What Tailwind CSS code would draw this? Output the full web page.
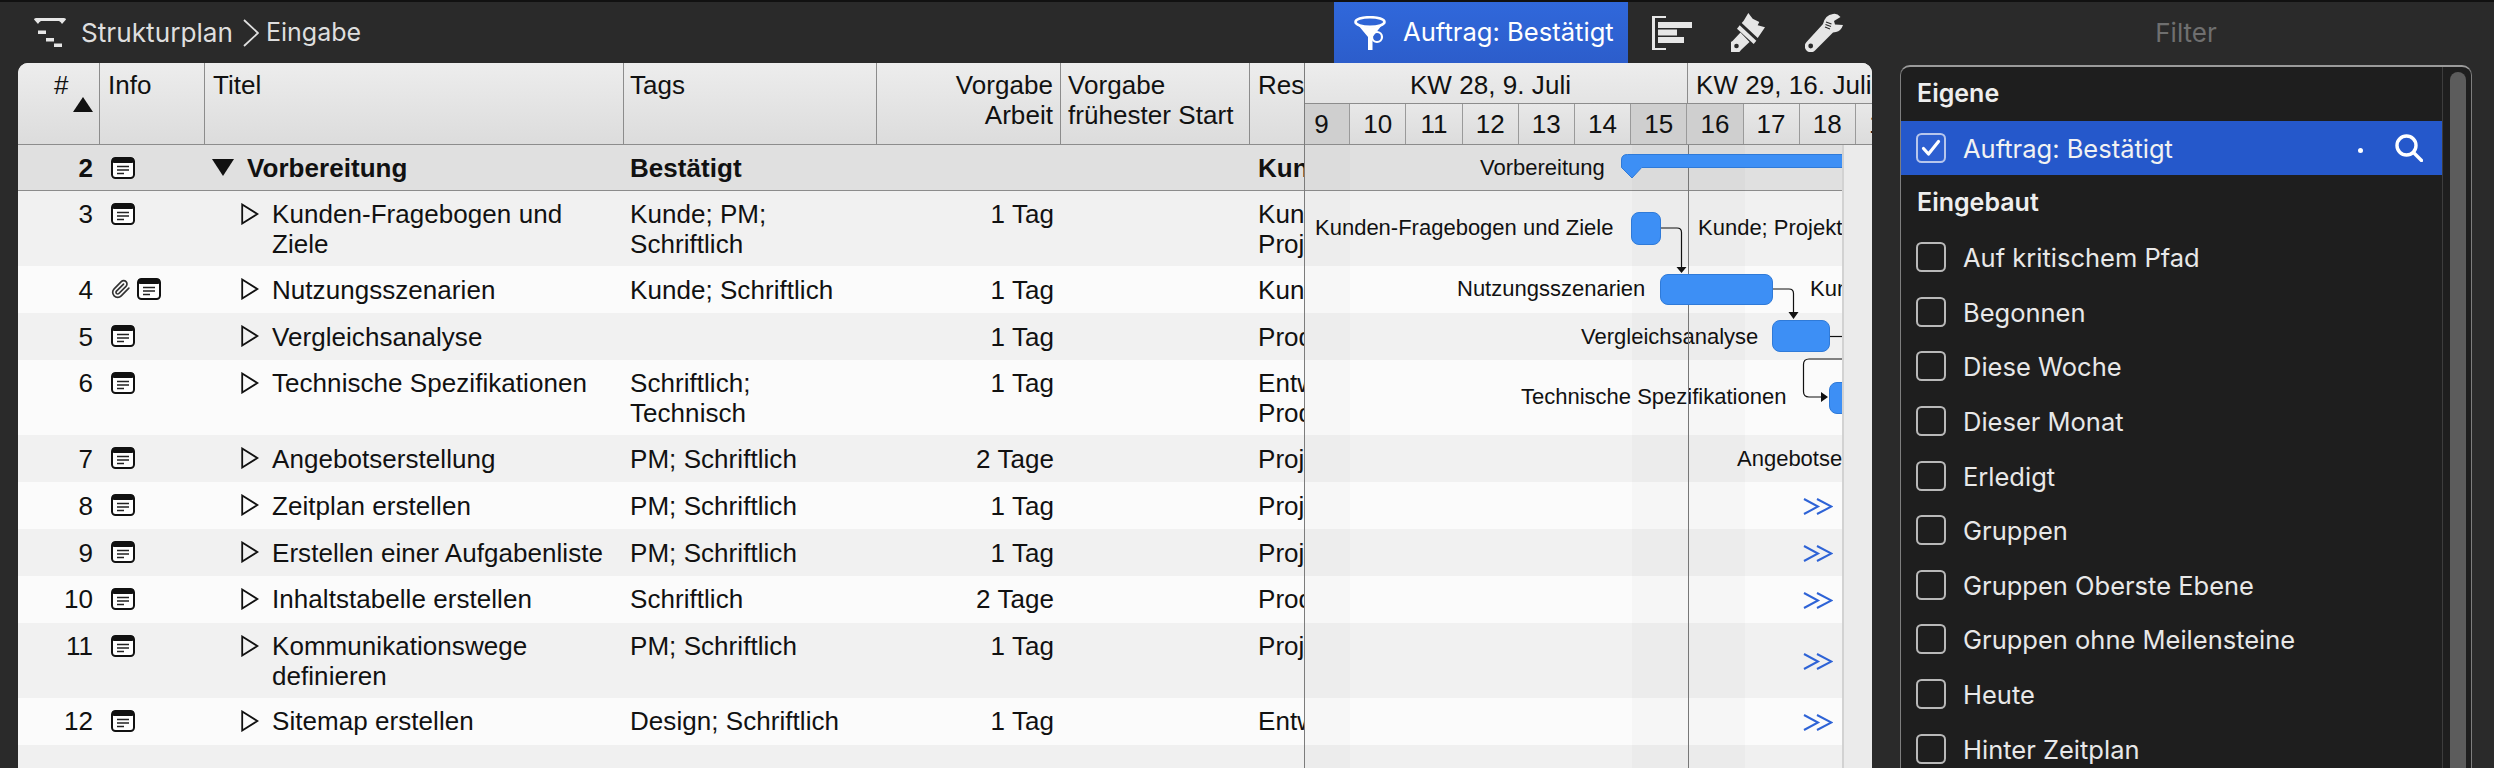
<!DOCTYPE html>
<html lang="de">
<head>
<meta charset="UTF-8">
<title>Strukturplan - Eingabe</title>
<script src="https://cdn.jsdelivr.net/npm/@tailwindcss/browser@4"></script>
</head>
<body class="w-[2494px] h-[768px] overflow-hidden bg-[#2a2a2a] font-['Inter',sans-serif]">

<svg class="hidden">
  <symbol id="note" viewBox="0 0 24 22">
    <rect x="1" y="1" width="22" height="20" rx="3.5" fill="#fff" stroke="#111" stroke-width="2"/>
    <rect x="1" y="1" width="22" height="5" rx="2" fill="#111"/>
    <path d="M6 9.5h12M6 13h12M6 16.5h7" stroke="#222" stroke-width="1.6" fill="none"/>
  </symbol>
  <symbol id="disc" viewBox="0 0 18 22">
    <path d="M1.2 1.5 16.4 11 1.2 20.5Z" fill="none" stroke="#111" stroke-width="1.8"/>
  </symbol>
  <symbol id="more" viewBox="0 0 30 17">
    <path d="M1 1 15 8.5 1 16M14 1 28.5 8.5 14 16" fill="none" stroke="#2e63d6" stroke-width="2"/>
  </symbol>
  <symbol id="box" viewBox="0 0 30 30">
    <rect x="1" y="1" width="28" height="28" rx="4.5" fill="none" stroke="#b9b9b9" stroke-width="2"/>
  </symbol>
</svg>

<!-- toolbar -->
<header class="flex h-[63px] border-t-2 border-[#111]">
  <div class="w-[1334px] flex items-center pl-[34px] text-[#dedede]">
    <svg class="w-[32px] h-[29px]" viewBox="0 0 32 29" fill="#e6e6e6"><path d="M0 1.5Q0 0 2 0H30Q32 0 32 1.5L28 6Q27 4 25 3H7Q5 4 4 6ZM4 12.5h8v3.5H4ZM12 20h8v3.5h-8ZM20 25.5h8v3.5h-8Z"/></svg>
    <span class="ml-[15px] text-[26.2px]">Strukturplan</span>
    <svg class="ml-[10px] w-[16px] h-[28px]" viewBox="0 0 16 28" fill="none" stroke="#e0e0e0" stroke-width="1.8"><path d="M1 1 15 14 1 27"/></svg>
    <span class="ml-[7px] text-[25px]">Eingabe</span>
  </div>
  <div class="w-[294px] flex items-center pl-[20px] bg-gradient-to-b from-[#3068db] to-[#2c5dcb] text-white text-[25.6px]">
    <svg class="w-[32px] h-[34px] shrink-0" viewBox="0 0 32 34" fill="none" stroke="#fff"><ellipse cx="16" cy="6" rx="14.5" ry="4.8" stroke-width="2.6"/><path d="M4 9Q16 14 28 9L18.5 21V34H14V21Z" fill="#fff" stroke="none"/><circle cx="23" cy="21" r="5" stroke-width="2.2"/></svg>
    <span class="ml-[17px] whitespace-nowrap">Auftrag: Bestätigt</span>
  </div>
  <div class="w-[272px] flex items-center pl-[24px]">
    <svg class="w-[40px] h-[34px]" viewBox="0 0 40 34" fill="#e6e6e6"><path d="M0 0h14v2H3v30h11v2H0Z"/><path d="M6 6h34v6H6ZM6 13.5h19v6H6ZM6 21h26v6H6Z"/></svg>
    <svg class="ml-[39px] w-[35px] h-[39px]" viewBox="0 0 35 39" fill="#e6e6e6"><path d="M10.7 10 12.7 7.7 17.3 0 21.7 5.7 28.3 9 26.7 12.3 34 14.3 26.7 25Z"/><path d="M6 15.7 8.7 12.3 25.3 27.7 22.7 31Z"/><path d="M9.5 19.5 18.5 29 10 37A6.5 6.5 0 1 1 1.5 28Z"/><circle cx="5.5" cy="33" r="2.3" fill="#2a2a2a"/></svg>
    <svg class="ml-[39px] w-[38px] h-[39px]" viewBox="0 0 38 39" fill="#e6e6e6"><path d="M1.5 29 18 11Q20 2 28 1 32 0 35.5 4L29 8 30 11.5 38 12Q36 18 31 19L28 19.5 10 37.5A6 6 0 1 1 1.5 29Z"/><circle cx="5.7" cy="33" r="2.4" fill="#2a2a2a"/><path d="M20.5 11.5l5.5 2M21 9l5.500 2M20 14l5 2" stroke="#2a2a2a" stroke-width="1.1" fill="none"/></svg>
  </div>
  <div class="w-[572px] flex items-center justify-center text-[#6f6f6f] text-[26px]">Filter</div>
</header>

<main class="flex pl-[18px]">
  <!-- table + gantt -->
  <section class="flex w-[1854px] h-[705px] rounded-t-[10px] overflow-hidden bg-[#f0f0f0] font-['Liberation_Sans',sans-serif] text-[26px] leading-[30px] tracking-[0.05px] text-[#111]">
    <div class="w-[1286px] shrink-0 flex flex-col">
      <div class="flex h-[82px] shrink-0 border-b border-[#8c8c8c] bg-gradient-to-b from-[#ededed] to-[#dcdcdc] [&>div]:border-r [&>div]:border-[#8c8c8c] [&>div]:pt-[7px]">
        <div class="w-[82px]"><span class="pl-[36px] block">#</span><svg class="ml-[55px] -mt-[3px] w-[20px] h-[15px]" viewBox="0 0 20 15"><path d="M10 0 20 15H0Z" fill="#111"/></svg></div>
        <div class="w-[105px] pl-[8px]">Info</div>
        <div class="w-[419px] pl-[8px]">Titel</div>
        <div class="w-[253px] pl-[6px]">Tags</div>
        <div class="w-[184px] pr-[7px] text-right">Vorgabe<br>Arbeit</div>
        <div class="w-[189px] pl-[7px]">Vorgabe<br>frühester Start</div>
        <div class="w-[54px] pl-[8px] !border-r-0 overflow-hidden">Ressourcen</div>
      </div>

      <div class="flex h-[46px] shrink-0 pt-[8px] border-b border-[#8c8c8c] bg-[#e0e0e0] font-bold">
        <div class="w-[82px] pr-[7px] text-right">2</div>
        <div class="w-[105px] pl-[11px] pt-[4px]"><svg class="w-[24px] h-[22px]"><use href="#note"/></svg></div>
        <div class="w-[419px] pl-[7px] flex items-start"><svg class="mt-[6px] w-[22px] h-[17px]" viewBox="0 0 22 17"><path d="M0 0H22L11 17Z" fill="#111"/></svg><span class="ml-[13px]">Vorbereitung</span></div>
        <div class="w-[253px] pl-[6px]">Bestätigt</div>
        <div class="w-[184px]"></div>
        <div class="w-[189px]"></div>
        <div class="w-[54px] pl-[8px] overflow-hidden whitespace-nowrap">Kunde</div>
      </div>

      <div class="flex h-[75px] shrink-0 pt-[8px] bg-[#f1f1f1]">
        <div class="w-[82px] pr-[7px] text-right">3</div>
        <div class="w-[105px] pl-[11px] pt-[4px]"><svg class="w-[24px] h-[22px]"><use href="#note"/></svg></div>
        <div class="w-[419px] pl-[36px] flex"><svg class="mt-[4px] w-[18px] h-[22px] shrink-0"><use href="#disc"/></svg><span class="ml-[13px]">Kunden-Fragebogen und<br>Ziele</span></div>
        <div class="w-[253px] pl-[6px]">Kunde; PM;<br>Schriftlich</div>
        <div class="w-[184px] pr-[7px] text-right">1 Tag</div>
        <div class="w-[189px]"></div>
        <div class="w-[54px] pl-[8px] overflow-hidden whitespace-nowrap">Kunde<br>Projektleiter</div>
      </div>

      <div class="flex h-[47px] shrink-0 pt-[9px] bg-[#fbfbfb]">
        <div class="w-[82px] pr-[7px] text-right">4</div>
        <div class="w-[105px] pl-[11px] pt-[3px] flex"><svg class="w-[20px] h-[22px]" viewBox="0 0 24 24" fill="none" stroke="#333" stroke-width="2" stroke-linecap="round"><path d="m21.44 11.05-9.19 9.19a6 6 0 0 1-8.49-8.49l8.57-8.57A4 4 0 1 1 18 8.84l-8.59 8.57a2 2 0 0 1-2.83-2.83l8.49-8.48"/></svg><svg class="ml-[6px] w-[24px] h-[22px]"><use href="#note"/></svg></div>
        <div class="w-[419px] pl-[36px] flex"><svg class="mt-[3px] w-[18px] h-[22px] shrink-0"><use href="#disc"/></svg><span class="ml-[13px]">Nutzungsszenarien</span></div>
        <div class="w-[253px] pl-[6px]">Kunde; Schriftlich</div>
        <div class="w-[184px] pr-[7px] text-right">1 Tag</div>
        <div class="w-[189px]"></div>
        <div class="w-[54px] pl-[8px] overflow-hidden whitespace-nowrap">Kunde</div>
      </div>

      <div class="flex h-[47px] shrink-0 pt-[9px] bg-[#f1f1f1]">
        <div class="w-[82px] pr-[7px] text-right">5</div>
        <div class="w-[105px] pl-[11px] pt-[3px]"><svg class="w-[24px] h-[22px]"><use href="#note"/></svg></div>
        <div class="w-[419px] pl-[36px] flex"><svg class="mt-[3px] w-[18px] h-[22px] shrink-0"><use href="#disc"/></svg><span class="ml-[13px]">Vergleichsanalyse</span></div>
        <div class="w-[253px] pl-[6px]"></div>
        <div class="w-[184px] pr-[7px] text-right">1 Tag</div>
        <div class="w-[189px]"></div>
        <div class="w-[54px] pl-[8px] overflow-hidden whitespace-nowrap">Produkt</div>
      </div>

      <div class="flex h-[75px] shrink-0 pt-[8px] bg-[#fbfbfb]">
        <div class="w-[82px] pr-[7px] text-right">6</div>
        <div class="w-[105px] pl-[11px] pt-[4px]"><svg class="w-[24px] h-[22px]"><use href="#note"/></svg></div>
        <div class="w-[419px] pl-[36px] flex"><svg class="mt-[4px] w-[18px] h-[22px] shrink-0"><use href="#disc"/></svg><span class="ml-[13px]">Technische Spezifikationen</span></div>
        <div class="w-[253px] pl-[6px]">Schriftlich;<br>Technisch</div>
        <div class="w-[184px] pr-[7px] text-right">1 Tag</div>
        <div class="w-[189px]"></div>
        <div class="w-[54px] pl-[8px] overflow-hidden whitespace-nowrap">Entwickler<br>Produkt</div>
      </div>

      <div class="flex h-[47px] shrink-0 pt-[9px] bg-[#f1f1f1]">
        <div class="w-[82px] pr-[7px] text-right">7</div>
        <div class="w-[105px] pl-[11px] pt-[3px]"><svg class="w-[24px] h-[22px]"><use href="#note"/></svg></div>
        <div class="w-[419px] pl-[36px] flex"><svg class="mt-[3px] w-[18px] h-[22px] shrink-0"><use href="#disc"/></svg><span class="ml-[13px]">Angebotserstellung</span></div>
        <div class="w-[253px] pl-[6px]">PM; Schriftlich</div>
        <div class="w-[184px] pr-[7px] text-right">2 Tage</div>
        <div class="w-[189px]"></div>
        <div class="w-[54px] pl-[8px] overflow-hidden whitespace-nowrap">Projektleiter</div>
      </div>

      <div class="flex h-[47px] shrink-0 pt-[9px] bg-[#fbfbfb]">
        <div class="w-[82px] pr-[7px] text-right">8</div>
        <div class="w-[105px] pl-[11px] pt-[3px]"><svg class="w-[24px] h-[22px]"><use href="#note"/></svg></div>
        <div class="w-[419px] pl-[36px] flex"><svg class="mt-[3px] w-[18px] h-[22px] shrink-0"><use href="#disc"/></svg><span class="ml-[13px]">Zeitplan erstellen</span></div>
        <div class="w-[253px] pl-[6px]">PM; Schriftlich</div>
        <div class="w-[184px] pr-[7px] text-right">1 Tag</div>
        <div class="w-[189px]"></div>
        <div class="w-[54px] pl-[8px] overflow-hidden whitespace-nowrap">Projektleiter</div>
      </div>

      <div class="flex h-[47px] shrink-0 pt-[9px] bg-[#f1f1f1]">
        <div class="w-[82px] pr-[7px] text-right">9</div>
        <div class="w-[105px] pl-[11px] pt-[3px]"><svg class="w-[24px] h-[22px]"><use href="#note"/></svg></div>
        <div class="w-[419px] pl-[36px] flex"><svg class="mt-[3px] w-[18px] h-[22px] shrink-0"><use href="#disc"/></svg><span class="ml-[13px]">Erstellen einer Aufgabenliste</span></div>
        <div class="w-[253px] pl-[6px]">PM; Schriftlich</div>
        <div class="w-[184px] pr-[7px] text-right">1 Tag</div>
        <div class="w-[189px]"></div>
        <div class="w-[54px] pl-[8px] overflow-hidden whitespace-nowrap">Projektleiter</div>
      </div>

      <div class="flex h-[47px] shrink-0 pt-[8px] bg-[#fbfbfb]">
        <div class="w-[82px] pr-[7px] text-right">10</div>
        <div class="w-[105px] pl-[11px] pt-[4px]"><svg class="w-[24px] h-[22px]"><use href="#note"/></svg></div>
        <div class="w-[419px] pl-[36px] flex"><svg class="mt-[4px] w-[18px] h-[22px] shrink-0"><use href="#disc"/></svg><span class="ml-[13px]">Inhaltstabelle erstellen</span></div>
        <div class="w-[253px] pl-[6px]">Schriftlich</div>
        <div class="w-[184px] pr-[7px] text-right">2 Tage</div>
        <div class="w-[189px]"></div>
        <div class="w-[54px] pl-[8px] overflow-hidden whitespace-nowrap">Produkt</div>
      </div>

      <div class="flex h-[75px] shrink-0 pt-[8px] bg-[#f1f1f1]">
        <div class="w-[82px] pr-[7px] text-right">11</div>
        <div class="w-[105px] pl-[11px] pt-[4px]"><svg class="w-[24px] h-[22px]"><use href="#note"/></svg></div>
        <div class="w-[419px] pl-[36px] flex"><svg class="mt-[4px] w-[18px] h-[22px] shrink-0"><use href="#disc"/></svg><span class="ml-[13px]">Kommunikationswege<br>definieren</span></div>
        <div class="w-[253px] pl-[6px]">PM; Schriftlich</div>
        <div class="w-[184px] pr-[7px] text-right">1 Tag</div>
        <div class="w-[189px]"></div>
        <div class="w-[54px] pl-[8px] overflow-hidden whitespace-nowrap">Projektleiter</div>
      </div>

      <div class="flex h-[47px] shrink-0 pt-[8px] bg-[#fbfbfb]">
        <div class="w-[82px] pr-[7px] text-right">12</div>
        <div class="w-[105px] pl-[11px] pt-[4px]"><svg class="w-[24px] h-[22px]"><use href="#note"/></svg></div>
        <div class="w-[419px] pl-[36px] flex"><svg class="mt-[4px] w-[18px] h-[22px] shrink-0"><use href="#disc"/></svg><span class="ml-[13px]">Sitemap erstellen</span></div>
        <div class="w-[253px] pl-[6px]">Design; Schriftlich</div>
        <div class="w-[184px] pr-[7px] text-right">1 Tag</div>
        <div class="w-[189px]"></div>
        <div class="w-[54px] pl-[8px] overflow-hidden whitespace-nowrap">Entwickler</div>
      </div>
    </div>

    <!-- gantt -->
    <div class="relative w-[568px] shrink-0 flex flex-col border-l border-[#7c7c7c] overflow-hidden">
      <div class="h-[82px] shrink-0 border-b border-[#8c8c8c] bg-[#e6e6e6] overflow-hidden">
        <div class="flex h-[41px] border-b border-[#8c8c8c] -ml-[11px] bg-gradient-to-b from-[#ededed] to-[#e4e4e4]">
          <div class="w-[394px] shrink-0 text-center border-r border-[#8c8c8c] pt-[7px]">KW 28, 9. Juli</div>
          <div class="pl-[8px] pt-[7px] whitespace-nowrap">KW 29, 16. Juli</div>
        </div>
        <div class="flex h-[40px] -ml-[11px] text-center bg-gradient-to-b from-[#e8e8e8] to-[#dcdcdc] [&>div]:w-[56.2px] [&>div]:shrink-0 [&>div]:border-r [&>div]:border-[#9a9a9a] [&>div]:pt-[5px]">
          <div class="bg-[#cfcfcf]">9</div><div>10</div><div>11</div><div>12</div><div>13</div><div>14</div><div class="bg-[#cfcfcf]">15</div><div class="bg-[#cfcfcf]">16</div><div>17</div><div>18</div><div>19</div>
        </div>
      </div>
      <div class="flex-1 flex min-h-0">
        <div class="w-[537px] shrink-0 flex flex-col">
          <div class="h-[46px] shrink-0 border-b border-[#8c8c8c] bg-[#e0e0e0]"></div>
          <div class="h-[75px] shrink-0 bg-[#f1f1f1]"></div>
          <div class="h-[47px] shrink-0 bg-[#fbfbfb]"></div>
          <div class="h-[47px] shrink-0 bg-[#f1f1f1]"></div>
          <div class="h-[75px] shrink-0 bg-[#fbfbfb]"></div>
          <div class="h-[47px] shrink-0 bg-[#f1f1f1]"></div>
          <div class="h-[47px] shrink-0 bg-[#fbfbfb]"></div>
          <div class="h-[47px] shrink-0 bg-[#f1f1f1]"></div>
          <div class="h-[47px] shrink-0 bg-[#fbfbfb]"></div>
          <div class="h-[75px] shrink-0 bg-[#f1f1f1]"></div>
          <div class="h-[47px] shrink-0 bg-[#fbfbfb]"></div>
        </div>
        <div class="flex-1 bg-[#ebebeb] border-l-2 border-[#d2d2d2]"></div>
      </div>

      <!-- free canvas of the chart: origin is the top of the first chart row -->
      <div class="absolute -left-px top-[82px] w-[538px] h-[623px] overflow-hidden text-[22px] leading-[30px] tracking-normal whitespace-nowrap">
        <div class="absolute left-0 top-0 w-[46px] h-full bg-black/[0.015]"></div>
        <div class="absolute left-[328px] top-0 w-[113px] h-full bg-black/[0.02]"></div>

        <span class="absolute left-[176px] top-[8px]">Vorbereitung</span>
        <span class="absolute left-[11px] top-[68px]">Kunden-Fragebogen und Ziele</span>
        <span class="absolute left-[394px] top-[68px]">Kunde; Projektleiter</span>
        <span class="absolute left-[153px] top-[129px]">Nutzungsszenarien</span>
        <span class="absolute left-[506px] top-[129px]">Kunde</span>
        <span class="absolute left-[277px] top-[177px]">Vergleichsanalyse</span>
        <span class="absolute left-[217px] top-[237px]">Technische Spezifikationen</span>
        <span class="absolute left-[433px] top-[299px]">Angebotserstellung</span>

        <div class="absolute left-[384px] top-0 w-px h-full bg-[#777]"></div>

        <div class="absolute left-[327px] top-[67px] w-[30px] h-[33px] rounded-[8px] bg-[#3d8ff5] border border-[#2f7ad8]"></div>
        <div class="absolute left-[356px] top-[129px] w-[113px] h-[31px] rounded-[8px] bg-[#3d8ff5] border border-[#2f7ad8]"></div>
        <div class="absolute left-[468px] top-[175px] w-[58px] h-[32px] rounded-[8px] bg-[#3d8ff5] border border-[#2f7ad8]"></div>
        <div class="absolute left-[525px] top-[237px] w-[40px] h-[32px] rounded-[8px] bg-[#3d8ff5] border border-[#2f7ad8]"></div>

        <svg class="absolute left-0 top-0 w-[538px] h-[300px]" viewBox="0 0 538 300">
          <path d="M317.5 15Q317.5 9.5 323.5 9.5H540V22.5H337.7L328 33 317.5 22.5Z" fill="#3d8ff5" stroke="#2f7ad8"/>
          <g fill="none" stroke="#111" stroke-width="1.2">
            <path d="M357 83H373q4.5 0 4.5 4.5V122"/>
            <path d="M469 144H485q4.5 0 4.5 4.5V168"/>
            <path d="M526 191.5H538"/>
            <path d="M538 214H505q-5.5 0-5.5 5.5V246.5q0 5.5 5.5 5.5H517"/>
          </g>
          <path d="M372.5 122H382.5L377.5 128ZM484.5 167H494.5L489.5 174ZM517 247V257L524 252Z" fill="#111"/>
        </svg>

        <svg class="absolute left-[499px] top-[353px] w-[30px] h-[17px]"><use href="#more"/></svg>
        <svg class="absolute left-[499px] top-[400px] w-[30px] h-[17px]"><use href="#more"/></svg>
        <svg class="absolute left-[499px] top-[447px] w-[30px] h-[17px]"><use href="#more"/></svg>
        <svg class="absolute left-[499px] top-[508px] w-[30px] h-[17px]"><use href="#more"/></svg>
        <svg class="absolute left-[499px] top-[569px] w-[30px] h-[17px]"><use href="#more"/></svg>
      </div>
    </div>
  </section>

  <!-- filter list -->
  <aside class="ml-[28px] mt-[2px] w-[572px] h-[720px] flex rounded-t-[10px] border border-[#7e7e7e] border-t-2 border-t-[#9a9a9a] bg-[#1e1e1e] text-[25.5px] text-[#e8e8e8]">
    <div class="w-[541px] shrink-0 flex flex-col">
      <div class="h-[54px] shrink-0 flex items-center pl-[16px] font-semibold text-[25px] text-[#eeeeee]">Eigene</div>
      <div class="h-[54px] shrink-0 flex items-center pl-[15px] bg-[#2558cb] text-[#f2f2f2]">
        <svg class="w-[30px] h-[30px]" viewBox="0 0 30 30" fill="none"><rect x="1" y="1" width="28" height="28" rx="4.5" fill="#2d5fd0" stroke="#b7c6ec" stroke-width="2"/><path d="M7.5 15.5 12.5 21 22.5 8.5" stroke="#fff" stroke-width="3.2" stroke-linecap="round" stroke-linejoin="round"/></svg>
        <span class="ml-[17px] mt-[2px]">Auftrag: Bestätigt</span>
        <span class="ml-auto mt-[4px] w-[5px] h-[5px] rounded-full bg-white"></span>
        <svg class="ml-[32px] mr-[19px] w-[28px] h-[28px]" viewBox="0 0 28 28" fill="none" stroke="#fff" stroke-width="3.4" stroke-linecap="round"><circle cx="11.5" cy="11.5" r="9.5"/><path d="M18.5 18.5 26.5 26.5"/></svg>
      </div>
      <div class="h-[55px] shrink-0 flex items-center pl-[16px] font-semibold text-[25px] text-[#eeeeee]">Eingebaut</div>
      <div class="h-[54.6px] shrink-0 flex items-center pl-[15px]"><svg class="w-[30px] h-[30px]"><use href="#box"/></svg><span class="ml-[17px] mt-[2px]">Auf kritischem Pfad</span></div>
      <div class="h-[54.6px] shrink-0 flex items-center pl-[15px]"><svg class="w-[30px] h-[30px]"><use href="#box"/></svg><span class="ml-[17px] mt-[2px]">Begonnen</span></div>
      <div class="h-[54.6px] shrink-0 flex items-center pl-[15px]"><svg class="w-[30px] h-[30px]"><use href="#box"/></svg><span class="ml-[17px] mt-[2px]">Diese Woche</span></div>
      <div class="h-[54.6px] shrink-0 flex items-center pl-[15px]"><svg class="w-[30px] h-[30px]"><use href="#box"/></svg><span class="ml-[17px] mt-[2px]">Dieser Monat</span></div>
      <div class="h-[54.6px] shrink-0 flex items-center pl-[15px]"><svg class="w-[30px] h-[30px]"><use href="#box"/></svg><span class="ml-[17px] mt-[2px]">Erledigt</span></div>
      <div class="h-[54.6px] shrink-0 flex items-center pl-[15px]"><svg class="w-[30px] h-[30px]"><use href="#box"/></svg><span class="ml-[17px] mt-[2px]">Gruppen</span></div>
      <div class="h-[54.6px] shrink-0 flex items-center pl-[15px]"><svg class="w-[30px] h-[30px]"><use href="#box"/></svg><span class="ml-[17px] mt-[2px]">Gruppen Oberste Ebene</span></div>
      <div class="h-[54.6px] shrink-0 flex items-center pl-[15px]"><svg class="w-[30px] h-[30px]"><use href="#box"/></svg><span class="ml-[17px] mt-[2px]">Gruppen ohne Meilensteine</span></div>
      <div class="h-[54.6px] shrink-0 flex items-center pl-[15px]"><svg class="w-[30px] h-[30px]"><use href="#box"/></svg><span class="ml-[17px] mt-[2px]">Heute</span></div>
      <div class="h-[54.6px] shrink-0 flex items-center pl-[15px]"><svg class="w-[30px] h-[30px]"><use href="#box"/></svg><span class="ml-[17px] mt-[2px]">Hinter Zeitplan</span></div>
    </div>
    <div class="flex-1 border-l border-[#3d3d3d] pt-[5px] pl-[7px]">
      <div class="w-[16px] h-full rounded-t-full bg-[#5c5c5c]"></div>
    </div>
  </aside>
</main>
</body>
</html>
